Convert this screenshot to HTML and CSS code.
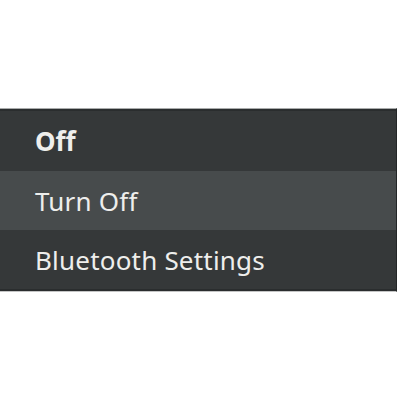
FILE: index.html
```
<!DOCTYPE html>
<html>
<head>
<meta charset="utf-8">
<link rel="stylesheet" href="styles.css">
</head>
<body>
<div class="page">
  <div class="menu">
    <div class="item header">Off</div>
    <div class="item hover">Turn Off</div>
    <div class="item">Bluetooth Settings</div>
  </div>
</div>
</body>
</html>
```
FILE: styles.css
```
html, body {
  margin: 0;
  padding: 0;
  background: #ffffff;
}
.page {
  width: 400px;
  height: 400px;
  padding-top: 108px;
  box-sizing: border-box;
}
.menu {
  width: 397px;
  background: #353839;
  border-top: 1px solid #a9abab;
  border-bottom: 1px solid #c4c5c5;
  border-right: 1px solid #232627;
  box-shadow: inset 0 2px 0 #2a2d2e, inset 0 -2px 0 #2a2d2e;
  padding: 2px 0;
  box-sizing: border-box;
  font-family: "Noto Sans", "Open Sans", sans-serif;
  font-size: 26px;
  letter-spacing: 0.2px;
  color: #eeeeec;
}
.item {
  height: 59px;
  display: flex;
  align-items: center;
  padding-left: 35px;
}
.header {
  font-weight: bold;
  letter-spacing: 0;
  height: 60px;
}
.hover {
  background: #474b4c;
}
```
